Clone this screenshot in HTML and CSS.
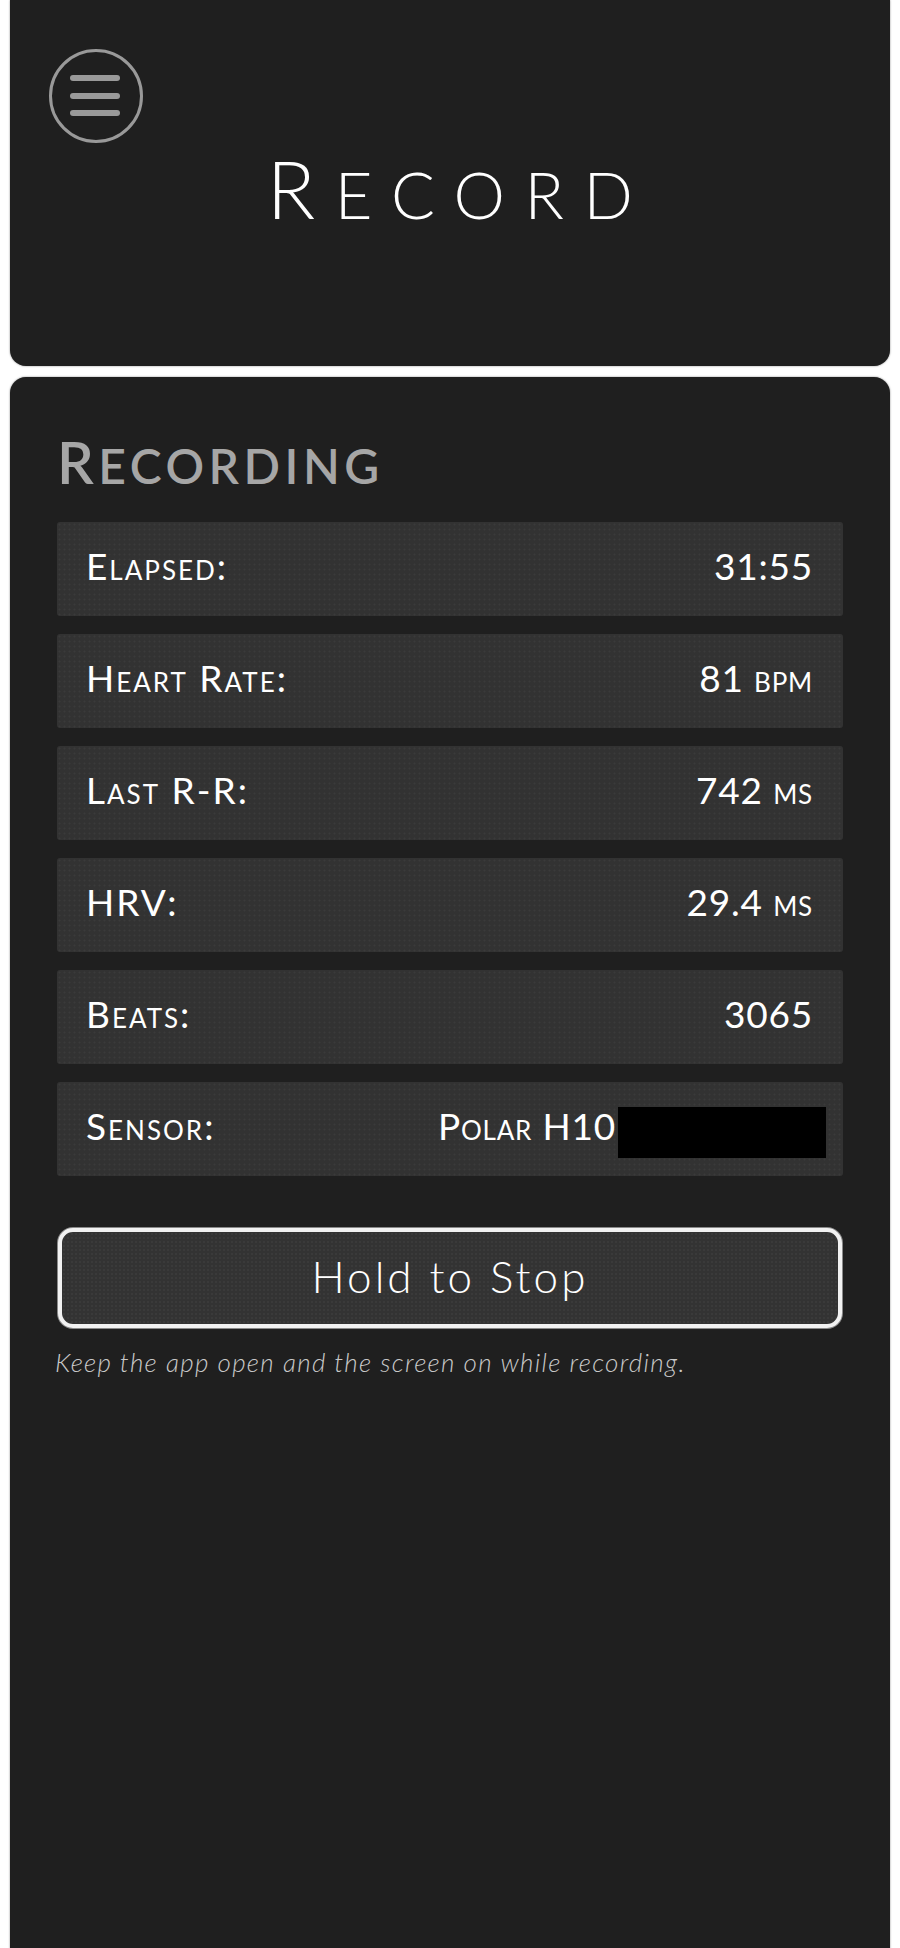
FILE: index.html
```html
<!DOCTYPE html>
<html lang="en">
<head>
<meta charset="utf-8">
<title>Record</title>
<link rel="stylesheet" href="styles.css">
</head>
<body>
<header class="header">
  <button class="menu" aria-label="Menu">
    <svg width="94" height="94" viewBox="0 0 94 94">
      <circle cx="47" cy="47" r="45.5" fill="none" stroke="#999" stroke-width="3"/>
      <g stroke="#999" stroke-width="6" stroke-linecap="round">
        <line x1="24" y1="29" x2="68" y2="29"/>
        <line x1="24" y1="47" x2="68" y2="47"/>
        <line x1="24" y1="64" x2="68" y2="64"/>
      </g>
    </svg>
  </button>
  <h1 class="title">Record</h1>
</header>
<main class="card">
  <h2 class="heading">Recording</h2>
  <div class="rows">
    <div class="row"><span class="label">Elapsed:</span><span class="value">31:55</span></div>
    <div class="row"><span class="label">Heart Rate:</span><span class="value">81 bpm</span></div>
    <div class="row"><span class="label">Last R-R:</span><span class="value">742 ms</span></div>
    <div class="row"><span class="label">HRV:</span><span class="value">29.4 ms</span></div>
    <div class="row"><span class="label">Beats:</span><span class="value">3065</span></div>
    <div class="row"><span class="label">Sensor:</span><span class="value">Polar H10<span class="redact"></span></span></div>
  </div>
  <button class="stop">Hold to Stop</button>
  <p class="note">Keep the app open and the screen on while recording.</p>
</main>
</body>
</html>
```
FILE: styles.css
```css
html, body {
  margin: 0;
  padding: 0;
}
body {
  background: #ffffff;
  padding: 0 10px;
  font-family: Lato, "Open Sans", sans-serif;
  color: #fff;
  overflow: hidden;
}
.header {
  height: 366px;
  box-sizing: border-box;
  background: #1f1f1f;
  border-radius: 0 0 16px 16px;
  box-shadow: 0 0 2px rgba(0,0,0,0.5);
  padding: 49px 0 0 39px;
}
.menu {
  display: block;
  width: 94px;
  height: 94px;
  padding: 0;
  border: 0;
  background: none;
}
.menu svg { display: block; }
.title {
  margin: 5px 0 0 -39px;
  padding-left: 19px;
  text-align: center;
  font-size: 65px;
  line-height: 80px;
  font-weight: 300;
  letter-spacing: 19.5px;
  text-transform: uppercase;
  color: #fff;
}
.title::first-letter {
  font-size: 80px;
}
.card {
  margin-top: 11px;
  min-height: 1620px;
  background: #1f1f1f;
  border-radius: 16px 16px 0 0;
  box-shadow: 0 0 2px rgba(0,0,0,0.5);
  padding: 56px 47px 0 47px;
  box-sizing: border-box;
}
.heading {
  margin: 0;
  font-size: 48px;
  line-height: 58px;
  font-weight: 600;
  letter-spacing: 4.5px;
  text-transform: uppercase;
  color: #a6a6a6;
}
.heading::first-letter {
  font-size: 58px;
}
.rows {
  margin-top: 27px;
  display: flex;
  flex-direction: column;
  gap: 18px;
}
.row {
  height: 94px;
  box-sizing: border-box;
  display: flex;
  align-items: center;
  justify-content: space-between;
  padding: 0 30px 8px 29px;
  background-color: #323232;
  background-image: radial-gradient(circle, #3a3a3a 0.8px, transparent 1.2px);
  background-size: 5px 5px;
  border-radius: 3px;
  font-size: 37px;
  font-weight: 400;
  font-variant: small-caps;
  letter-spacing: 2px;
}
.value {
  display: flex;
  align-items: center;
  letter-spacing: 0.8px;
}
.redact {
  display: inline-block;
  width: 208px;
  height: 51px;
  margin: 14px -13px 0 2px;
  background: #000;
}
.stop {
  display: block;
  width: 784px;
  height: 100px;
  margin: 52px 0 0 1px;
  box-sizing: border-box;
  border: 4px solid #f2f2f2;
  border-radius: 15px;
  box-shadow: 0 0 0 1px #8a8a8a;
  background-color: #333;
  background-image: radial-gradient(circle, #3a3a3a 0.8px, transparent 1.2px);
  background-size: 4px 4px;
  color: #fff;
  font-family: Lato, "Open Sans", sans-serif;
  font-size: 44px;
  font-weight: 300;
  letter-spacing: 3px;
  padding: 0 0 4px 0;
}
.note {
  margin: 18px 0 0 -2px;
  font-size: 26px;
  font-style: italic;
  font-weight: 300;
  letter-spacing: 1.3px;
  color: #c8c8c8;
}
```
